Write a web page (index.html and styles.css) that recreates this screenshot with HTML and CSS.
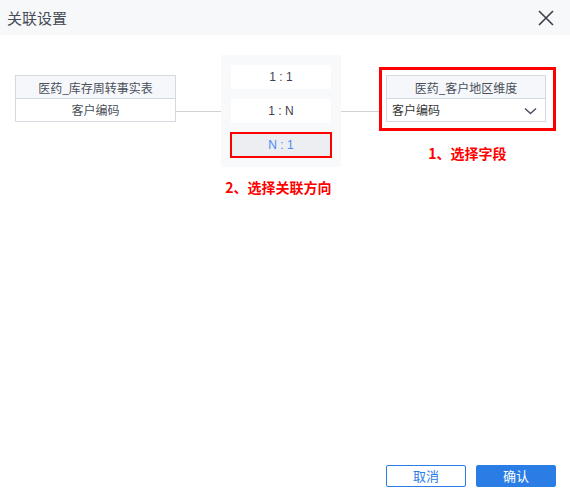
FILE: index.html
```html
<!DOCTYPE html>
<html lang="zh">
<head>
<meta charset="utf-8">
<link rel="stylesheet" href="styles.css">
</head>
<body>
<div class="dialog">
  <div class="header">
    <span class="title">关联设置</span>
    <svg class="close" width="16" height="16" viewBox="0 0 16 16"><path d="M1 1 L15 15 M15 1 L1 15" stroke="#3a3f4a" stroke-width="1.6" fill="none"/></svg>
  </div>
  <div class="content">
    <div class="left-col">
      <div class="tbl">
        <div class="tbl-head">医药_库存周转事实表</div>
        <div class="tbl-row">客户编码</div>
      </div>
    </div>
    <div class="conn conn-left"></div>
    <div class="mid-col">
      <div class="panel">
        <div class="rel">1 : 1</div>
        <div class="rel">1 : N</div>
        <div class="rel active">N : 1</div>
      </div>
      <div class="note note-mid">2、选择关联方向</div>
    </div>
    <div class="conn conn-right"></div>
    <div class="right-col">
      <div class="redbox">
        <div class="tbl tbl-right">
          <div class="tbl-head">医药_客户地区维度</div>
          <div class="tbl-row select">
            <span>客户编码</span>
            <svg width="13" height="8" viewBox="0 0 13 8"><path d="M1 1.5 L6.5 6.5 L12 1.5" stroke="#4a5263" stroke-width="1.5" fill="none"/></svg>
          </div>
        </div>
      </div>
      <div class="note note-right">1、选择字段</div>
    </div>
  </div>
  <div class="footer">
    <button class="btn btn-cancel">取消</button>
    <button class="btn btn-ok">确认</button>
  </div>
</div>
</body>
</html>
```

FILE: styles.css
```css
* { box-sizing: border-box; }
html, body { margin: 0; padding: 0; background: #fff; }
body {
  font-family: "Noto Sans CJK SC", "Noto Sans", "Liberation Sans", sans-serif;
  color: #333;
}
.dialog {
  width: 570px;
  height: 493px;
  display: flex;
  flex-direction: column;
  background: #fff;
}
.header {
  height: 35px;
  background: #f7f8fa;
  display: flex;
  align-items: center;
  justify-content: space-between;
  padding: 0 16px 0 7px;
}
.title {
  font-size: 15px;
  color: #454b57;
  line-height: 20px;
}
.close { display: block; margin-top: 1px; }

.content {
  display: flex;
  align-items: flex-start;
  padding: 20px 0 0 15px;
}
.left-col { margin-top: 20px; }
.tbl {
  width: 161px;
  border: 1px solid #d5dae1;
  font-size: 12px;
  color: #4a4f5a;
}
.tbl-head {
  height: 23px;
  line-height: 23px;
  text-align: center;
  background: #f5f7fa;
  border-bottom: 1px solid #d5dae1;
}
.tbl-row {
  height: 22px;
  line-height: 22px;
  text-align: center;
  background: #fff;
}
.conn {
  height: 1px;
  background: #cfd2d6;
  margin-top: 56px;
}
.conn-left { width: 45px; }
.conn-right { width: 38px; }

.mid-col {
  width: 120px;
  display: flex;
  flex-direction: column;
  align-items: center;
}
.panel {
  width: 120px;
  background: #f8f9fb;
  padding: 10px;
  display: flex;
  flex-direction: column;
  gap: 10px;
}
.rel {
  height: 24px;
  line-height: 24px;
  background: #fff;
  text-align: center;
  font-family: "Liberation Sans", "Noto Sans CJK SC", sans-serif;
  font-size: 12px;
  color: #3d4350;
}
.rel.active {
  background: #eceef1;
  color: #4a8cf0;
  outline: 2px solid #f00;
  outline-offset: -1px;
}
.note {
  font-size: 14px;
  font-weight: bold;
  color: #f00;
  line-height: 20px;
  white-space: nowrap;
}
.note-mid { margin-top: 10px; margin-left: -5px; }

.right-col {
  display: flex;
  flex-direction: column;
  align-items: center;
  margin-top: 12px;
}
.redbox {
  width: 177px;
  height: 64px;
  border: 3px solid #f00;
  padding: 5px 7px 0 4px;
}
.tbl-right { width: 160px; }
.tbl-row.select {
  display: flex;
  align-items: center;
  justify-content: space-between;
  padding: 0 8px 0 5px;
  font-size: 12px;
  color: #333;
}
.tbl-row.select svg { display: block; margin-top: 1px; }
.note-right { margin-top: 12px; }

.footer {
  margin-top: auto;
  display: flex;
  justify-content: flex-end;
  gap: 10px;
  padding: 0 14px 6px 0;
}
.btn {
  width: 80px;
  height: 22px;
  font-family: inherit;
  font-size: 13px;
  line-height: 20px;
  padding: 0;
  border-radius: 2px;
  border: 1px solid #2b7de6;
  cursor: pointer;
}
.btn-cancel { background: #fff; color: #2b7de6; }
.btn-ok { background: #2b7de6; color: #fff; }
```
